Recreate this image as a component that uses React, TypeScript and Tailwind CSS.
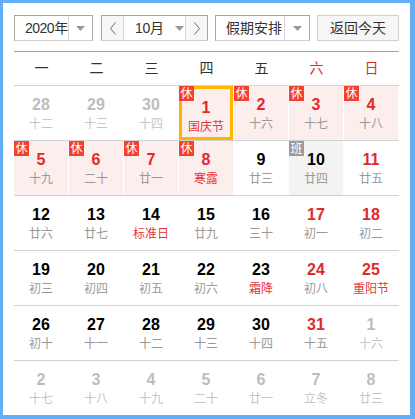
import React from "react";

type Cell = {
  d: number;
  l: string;
  other?: boolean;
  red?: boolean;
  fest?: boolean;
  tag?: "休" | "班";
  selected?: boolean;
};

const rows: Cell[][] = [
  [
    { d: 28, l: "十二", other: true },
    { d: 29, l: "十三", other: true },
    { d: 30, l: "十四", other: true },
    { d: 1, l: "国庆节", red: true, fest: true, tag: "休", selected: true },
    { d: 2, l: "十六", red: true, tag: "休" },
    { d: 3, l: "十七", red: true, tag: "休" },
    { d: 4, l: "十八", red: true, tag: "休" },
  ],
  [
    { d: 5, l: "十九", red: true, tag: "休" },
    { d: 6, l: "二十", red: true, tag: "休" },
    { d: 7, l: "廿一", red: true, tag: "休" },
    { d: 8, l: "寒露", red: true, fest: true, tag: "休" },
    { d: 9, l: "廿三" },
    { d: 10, l: "廿四", tag: "班" },
    { d: 11, l: "廿五", red: true },
  ],
  [
    { d: 12, l: "廿六" },
    { d: 13, l: "廿七" },
    { d: 14, l: "标准日", fest: true },
    { d: 15, l: "廿九" },
    { d: 16, l: "三十" },
    { d: 17, l: "初一", red: true },
    { d: 18, l: "初二", red: true },
  ],
  [
    { d: 19, l: "初三" },
    { d: 20, l: "初四" },
    { d: 21, l: "初五" },
    { d: 22, l: "初六" },
    { d: 23, l: "霜降", fest: true },
    { d: 24, l: "初八", red: true },
    { d: 25, l: "重阳节", red: true, fest: true },
  ],
  [
    { d: 26, l: "初十" },
    { d: 27, l: "十一" },
    { d: 28, l: "十二" },
    { d: 29, l: "十三" },
    { d: 30, l: "十四" },
    { d: 31, l: "十五", red: true },
    { d: 1, l: "十六", other: true },
  ],
  [
    { d: 2, l: "十七", other: true },
    { d: 3, l: "十八", other: true },
    { d: 4, l: "十九", other: true },
    { d: 5, l: "二十", other: true },
    { d: 6, l: "廿一", other: true },
    { d: 7, l: "立冬", other: true },
    { d: 8, l: "廿三", other: true },
  ],
];

const weekdays = ["一", "二", "三", "四", "五", "六", "日"];

const Caret = () => (
  <svg width="9" height="5" viewBox="0 0 9 5">
    <polygon points="0,0 9,0 4.5,5" fill="#999" />
  </svg>
);

const Chevron = ({ dir }: { dir: "l" | "r" }) => (
  <svg width="8" height="13" viewBox="0 0 8 13">
    <polyline
      points={dir === "l" ? "6.5,0.5 1.5,6.5 6.5,12.5" : "1.5,0.5 6.5,6.5 1.5,12.5"}
      fill="none"
      stroke="#666"
      strokeWidth="1"
    />
  </svg>
);

const DayCell = ({ c }: { c: Cell }) => {
  const bg =
    c.tag === "休" ? "bg-[#fdeeee]" : c.tag === "班" ? "bg-[#f3f3f3]" : "bg-white";
  const num = c.other
    ? "text-[#bdbdbd]"
    : c.red
    ? "text-[#e02a2a]"
    : "text-black";
  const lunar = c.other
    ? "text-[#c6c6c6]"
    : c.fest
    ? "text-[#e6353a]"
    : "text-[#999]";
  return (
    <div className={`relative h-[54px] border-r border-white ${bg}`}>
      <div
        className={`flex h-full flex-col items-center pt-[9px] ${
          c.selected ? "border-[3px] border-[#ffb400] pt-[6px]" : ""
        }`}
      >
        <span className={`text-[16px] font-bold leading-[20px] ${num}`}>{c.d}</span>
        <span className={`text-[12px] leading-[18px] ${lunar}`}>{c.l}</span>
      </div>
      {c.tag && (
        <span
          className={`absolute left-0 top-0 flex h-[15px] w-[15px] items-center justify-center text-[12px] leading-none text-white ${
            c.tag === "休" ? "bg-[#f5402f]" : "bg-[#9a9a9a]"
          }`}
        >
          {c.tag}
        </span>
      )}
    </div>
  );
};

const App = () => {
  return (
    <div className="h-[419px] w-[415px] border-t-[3px] border-l-[3px] border-r-[5px] border-b-[4px] border-[#63aff7] bg-white px-[11px] pt-[12px] font-['Liberation_Sans','Noto_Sans_CJK_SC',sans-serif] text-[#333]">
      <div className="flex h-[26px] items-stretch whitespace-nowrap text-[14px]">
        <div className="flex w-[79px] border border-[#a6a6a6] border-b-[#cfcfcf]">
          <div className="flex min-w-0 flex-1 items-center pl-[10px] tracking-[-0.5px]">
            2020年
          </div>
          <div className="flex w-[24px] shrink-0 items-center justify-center border-l border-[#d6d6d6]">
            <Caret />
          </div>
        </div>
        <div className="ml-[8px] flex w-[107px] border border-[#a6a6a6] border-b-[#cfcfcf]">
          <div className="flex w-[21px] shrink-0 items-center justify-center bg-[#f7f7f7]">
            <Chevron dir="l" />
          </div>
          <div className="flex min-w-0 flex-1 items-center border-x border-[#d6d6d6] pl-[11px] tracking-[-0.3px]">
            <span>10月</span>
            <span className="ml-[11px] flex">
              <Caret />
            </span>
          </div>
          <div className="flex w-[21px] shrink-0 items-center justify-center bg-[#f7f7f7]">
            <Chevron dir="r" />
          </div>
        </div>
        <div className="ml-[7px] flex w-[95px] border border-[#a6a6a6] border-b-[#cfcfcf]">
          <div className="flex min-w-0 flex-1 items-center pl-[10px]">假期安排</div>
          <div className="flex w-[25px] shrink-0 items-center justify-center border-l border-[#d6d6d6]">
            <Caret />
          </div>
        </div>
        <div className="ml-[7px] flex w-[82px] items-center justify-center border border-[#d0d0d0] bg-[#f6f6f6]">
          返回今天
        </div>
      </div>
      <div className="mt-[10px] border-t border-[#63aff7]">
        <div className="grid h-[34px] grid-cols-7 border-b border-[#d2d2d2] text-[14px]">
          {weekdays.map((w, i) => (
            <div
              key={w}
              className={`flex items-center justify-center ${
                i >= 5 ? "text-[#e02a2a]" : "text-[#333]"
              }`}
            >
              {w}
            </div>
          ))}
        </div>
        {rows.map((r, ri) => (
          <div
            key={ri}
            className={`grid grid-cols-7 ${ri < rows.length - 1 ? "border-b border-[#d2d2d2]" : ""}`}
          >
            {r.map((c, ci) => (
              <DayCell key={ci} c={c} />
            ))}
          </div>
        ))}
      </div>
    </div>
  );
};

export default App;
